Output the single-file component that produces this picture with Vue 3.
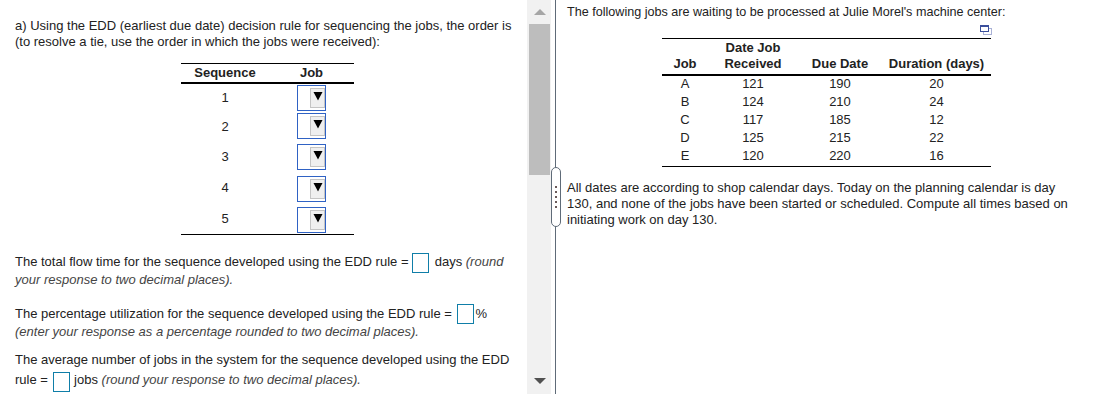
<script setup>
const seq = [
  { n: 1, cls: 'r1' },
  { n: 2, cls: 'r2' },
  { n: 3, cls: 'r3' },
  { n: 4, cls: 'r4' },
  { n: 5, cls: 'r5' }
]
const jobs = [
  ['A', 121, 190, 20],
  ['B', 124, 210, 24],
  ['C', 117, 185, 12],
  ['D', 125, 215, 22],
  ['E', 120, 220, 16]
]
</script>

<template>
  <div class="page">
    <section class="left">
      <p class="intro">a) Using the EDD (earliest due date) decision rule for sequencing the jobs, the order is<br />(to resolve a tie, use the order in which the jobs were received):</p>
      <table class="seq">
        <thead>
          <tr><th class="c1">Sequence</th><th class="c2">Job</th></tr>
        </thead>
        <tbody>
          <tr v-for="r in seq" :key="r.n" :class="r.cls">
            <td>{{ r.n }}</td>
            <td>
              <div class="sel"><span class="btn"><svg width="10" height="10" viewBox="0 0 10 10"><path d="M0.5 1H9.5L5 9.5Z" fill="#000" /></svg></span></div>
            </td>
          </tr>
        </tbody>
      </table>
      <p class="q q1">The total flow time for the sequence developed using the EDD rule = <span class="box"></span> days <i>(round<br />your response to two decimal places).</i></p>
      <p class="q q2">The percentage utilization for the sequence developed using the EDD rule = <span class="box"></span>%<br /><i>(enter your response as a percentage rounded to two decimal places).</i></p>
      <p class="q q3">The average number of jobs in the system for the sequence developed using the EDD<br />rule = <span class="box"></span> jobs <i>(round your response to two decimal places).</i></p>
    </section>

    <div class="scrollbar">
      <span class="up"></span>
      <span class="thumb"></span>
      <span class="down"></span>
    </div>

    <div class="divider">
      <div class="handle"><span></span><span></span><span></span><span></span><span></span></div>
    </div>

    <section class="right">
      <p class="top">The following jobs are waiting to be processed at Julie Morel's machine center:</p>
      <div class="iconrow">
        <svg width="12" height="10" viewBox="0 0 12 10">
          <rect x="3.5" y="3.5" width="8" height="6" fill="#fff" stroke="#a9b1d6" />
          <rect x="0.5" y="0.5" width="8" height="6" fill="#fff" stroke="#3b4f9c" />
          <rect x="0" y="0" width="9" height="2" fill="#3b4f9c" />
        </svg>
      </div>
      <table class="jobs">
        <thead>
          <tr>
            <th class="j1">Job</th>
            <th class="j2">Date Job<br />Received</th>
            <th class="j3">Due Date</th>
            <th class="j4">Duration (days)</th>
          </tr>
        </thead>
        <tbody>
          <tr v-for="j in jobs" :key="j[0]">
            <td v-for="(v, i) in j" :key="i">{{ v }}</td>
          </tr>
        </tbody>
      </table>
      <p class="note">All dates are according to shop calendar days. Today on the planning calendar is day<br />130, and none of the jobs have been started or scheduled. Compute all times based on<br />initiating work on day 130.</p>
    </section>
  </div>
</template>

<style>
html, body { margin: 0; background: #fff; }
</style>

<style scoped>
.page {
  display: flex;
  width: 1101px;
  height: 402px;
  overflow: hidden;
  background: #fff;
  color: #222;
  font: 13px/16px "Liberation Sans", Arial, sans-serif;
}
p { margin: 0; }
.left { width: 527px; flex: none; padding: 18px 0 0 15px; box-sizing: border-box; white-space: nowrap; }
.seq { border-collapse: separate; border-spacing: 0; margin: 13px 0 0 166px; table-layout: fixed; width: 173px; }
.seq th { height: 18px; padding: 0; font-weight: bold; border-top: 1px solid #000; border-bottom: 2px solid #000; }
.seq .c1 { width: 88px; }
.seq td { padding: 0; text-align: center; vertical-align: middle; }
.seq tbody tr:last-child td { border-bottom: 1px solid #000; }
.sel { display: flex; justify-content: flex-end; align-items: center; width: 29px; height: 26px; box-sizing: border-box; border: 1px solid #2f62c4; margin: 1px auto 1px; }
.seq .r2 .sel { margin-bottom: 2px; }
.seq .r3 .sel { margin-top: 3px; margin-bottom: 2px; }
.seq .r4 .sel { margin-top: 4px; margin-bottom: 2px; }
.seq .r5 .sel { margin-top: 3px; margin-bottom: 1px; }
.btn { width: 15px; height: 20px; box-sizing: border-box; border: 1px solid #c4c4c4; background: #efefef; display: flex; justify-content: center; padding-top: 2px; }
.box { display: inline-block; width: 17px; height: 20px; box-sizing: border-box; border: 1px solid #0f7ea8; vertical-align: middle; margin: -2px 2px -2px 0; }
.q i { color: #444; }
.q1 { margin-top: 18px; line-height: 18px; }
.q2 { margin-top: 16px; line-height: 18px; }
.q2 .box { margin-left: 2px; margin-right: 1px; transform: translateY(-1px); }
.q3 { margin-top: 9px; line-height: 20px; }
.q3 .box { margin-left: 1px; margin-right: 1px; transform: translateY(1px); }
.scrollbar { width: 24px; height: 394px; flex: none; background: #f1f1f1; position: relative; display: flex; flex-direction: column; align-items: flex-end; }
.thumb { width: 21px; height: 151px; background: #bdbdbd; margin: 24px 1px 0 0; }
.up, .down { position: absolute; left: 7px; width: 0; height: 0; border-left: 6px solid transparent; border-right: 6px solid transparent; }
.up { top: 9px; border-bottom: 6px solid #a6a6a6; }
.down { bottom: 10px; border-top: 6px solid #505050; }
.divider { width: 5px; flex: none; position: relative; box-sizing: border-box; border-right: 1px solid #5f6b78; height: 394px; }
.handle { position: absolute; left: 0; top: 167px; width: 10px; height: 60px; box-sizing: border-box; border: 1px solid #5f6b78; border-radius: 5px; background: #fff; display: flex; flex-direction: column; gap: 3px; align-items: center; justify-content: center; }
.handle span { width: 2px; height: 2px; background: #6a5a5a; }
.right { flex: 1; padding: 0 0 0 11px; }
.top { margin-top: 4px; font-size: 12.6px; }
.iconrow { width: 425px; height: 13px; margin-top: 5px; display: flex; justify-content: flex-end; }
.jobs { border-collapse: separate; border-spacing: 0; margin: 0 0 0 95px; table-layout: fixed; width: 329px; }
.jobs th { padding: 1px 0 2px; font-weight: bold; vertical-align: bottom; border-top: 1px solid #000; border-bottom: 2px solid #000; line-height: 16px; }
.jobs .j1 { width: 46px; }
.jobs .j2 { width: 90px; }
.jobs .j3 { width: 84px; }
.jobs td { text-align: center; padding: 0; height: 18px; line-height: 18px; }
.jobs tbody tr:first-child td { height: 17px; line-height: 16px; vertical-align: top; }
.jobs tbody tr:last-child td { padding-bottom: 1px; border-bottom: 1px solid #000; }
.note { margin-top: 13px; }
</style>
